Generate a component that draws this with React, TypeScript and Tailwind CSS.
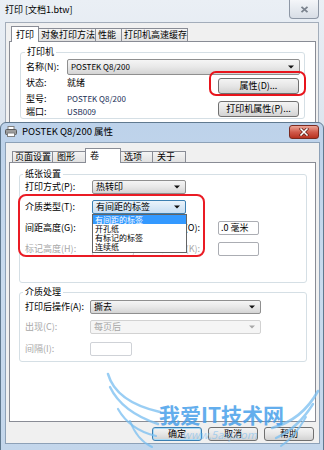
import React from "react";

const Arrow = ({ gray = false }: { gray?: boolean }) => (
  <svg width="6" height="4" viewBox="0 0 6 4" className="shrink-0">
    <path d="M0 0.5H6L3 3.5Z" fill={gray ? "#a8a8a8" : "#111"} />
  </svg>
);

const XIcon = ({ red = false }: { red?: boolean }) =>
  red ? (
    <svg width="10" height="8" viewBox="0 0 10 8">
      <path d="M2 1L8 7M8 1L2 7" stroke="#5a1810" strokeWidth="3" strokeLinecap="square" />
      <path d="M2 1L8 7M8 1L2 7" stroke="#ffffff" strokeWidth="1.6" strokeLinecap="square" />
    </svg>
  ) : (
    <svg width="9" height="7" viewBox="0 0 9 7">
      <path d="M1.5 0.8L7.5 6.2M7.5 0.8L1.5 6.2" stroke="#7b838e" strokeWidth="1.8" />
    </svg>
  );

const PrinterIcon = ({ className }: { className: string }) => (
  <svg width="12" height="11" viewBox="0 0 12 11" className={className}>
    <rect x="3" y="0.5" width="6" height="3.5" fill="#fff" stroke="#808080" />
    <rect x="0.5" y="3.5" width="11" height="5" rx="1" fill="#9c9c9c" stroke="#5a5a5a" />
    <rect x="2.5" y="7" width="7" height="3.5" fill="#fff" stroke="#808080" />
  </svg>
);

type ComboState = "normal" | "focused" | "disabled";

function Combo({
  value,
  className,
  state = "normal",
  valueClass = "",
}: {
  value: string;
  className: string;
  state?: ComboState;
  valueClass?: string;
}) {
  const look =
    state === "focused"
      ? "border-[#3c7fb1] bg-linear-to-b from-[#eaf3fb] to-[#c8def2] text-black"
      : state === "disabled"
      ? "border-[#d2d2d2] bg-[#f5f5f5] text-[#a6a6a6]"
      : "border-[#8f8f8f] bg-linear-to-b from-[#f5f5f5] via-[#e8e8e8] to-[#d4d4d4] text-black";
  return (
    <div
      className={`flex items-center justify-between rounded-[2px] border pl-[3px] pr-[5px] leading-[12px] ${look} ${className}`}
    >
      <span className={valueClass}>{value}</span>
      <Arrow gray={state === "disabled"} />
    </div>
  );
}

function TextBox({
  className,
  children,
  disabled = false,
}: {
  className: string;
  children?: React.ReactNode;
  disabled?: boolean;
}) {
  return (
    <div
      className={`h-[14px] rounded-[2px] border bg-white pl-[2px] leading-[12px] ${
        disabled ? "border-[#cfd2d7]" : "border-[#abadb3]"
      } ${className}`}
    >
      {children}
    </div>
  );
}

function Btn({
  className,
  children,
  def = false,
}: {
  className: string;
  children: React.ReactNode;
  def?: boolean;
}) {
  return (
    <div
      className={`flex items-center justify-center rounded-[3px] border bg-linear-to-b from-[#f4f4f4] via-[#e6e6e6] to-[#d2d2d2] leading-[12px] ${
        def ? "border-[#3c7fb1] shadow-[inset_0_0_0_1px_#a9dcf8]" : "border-[#707070]"
      } ${className}`}
    >
      {children}
    </div>
  );
}

function Tab({
  children,
  w,
  active = false,
  first = false,
  tall,
  short,
}: {
  children: React.ReactNode;
  w: string;
  active?: boolean;
  first?: boolean;
  tall: string;
  short: string;
}) {
  return (
    <div
      className={`flex items-center overflow-hidden whitespace-nowrap border border-[#898c95] pl-[2px] leading-[12px] ${w} ${
        first ? "" : "-ml-px"
      } ${active ? `${tall} border-b-0 bg-white` : `${short} bg-linear-to-b from-[#f4f4f4] to-[#e1e1e1]`}`}
    >
      {children}
    </div>
  );
}

function BackWindow() {
  return (
    <div className="absolute left-0 top-0 flex h-[140px] w-[324px] flex-col bg-linear-to-b from-[#eaeff5] to-[#dbe4ee]">
      <div className="flex h-[22px] shrink-0 items-start">
        <span className="ml-[5px] mt-[4px]">打印 [文档1.btw]</span>
        <div className="ml-auto mr-[5px] flex h-[19px] w-[30px] items-center justify-center rounded-b-[4px] border border-t-0 border-[#8d97a5] bg-linear-to-b from-[#f4f6f9] to-[#d8dee6]">
          <XIcon />
        </div>
      </div>
      <div className="ml-[5px] w-[314px] flex-1 border border-b-0 border-[#a3adba] bg-[#f0f0f0]">
        <div className="relative z-10 -mb-px flex h-[19px] items-end pl-[5px]">
          <Tab w="w-[28px]" active first tall="h-[16px]" short="h-[14px]">
            <span className="pl-[2px]">打印</span>
          </Tab>
          <Tab w="w-[58px]" tall="h-[16px]" short="h-[14px]">
            对象打印方法
          </Tab>
          <Tab w="w-[27px]" tall="h-[16px]" short="h-[14px]">
            性能
          </Tab>
          <Tab w="w-[67px]" tall="h-[16px]" short="h-[14px]">
            打印机高速缓存
          </Tab>
        </div>
        <div className="ml-[3px] h-[100px] w-[307px] border border-[#898c95] bg-white">
          <fieldset className="ml-[10px] mt-[4px] w-[285px] rounded-[3px] border border-[#d5dfe5]">
            <legend className="ml-[4px] px-[2px] leading-[12px]">打印机</legend>
            <div className="pl-[5px] pt-[1px]">
              <div className="flex items-center">
                <span className="w-[41px]">名称(N):</span>
                <Combo value="POSTEK Q8/200" className="h-[16px] w-[233px]" valueClass="text-[8px]" />
              </div>
              <div className="flex">
                <div className="flex-1">
                  <div className="mt-[1px] flex h-[13px] items-center">
                    <span className="w-[41px]">状态:</span>
                    <span>就绪</span>
                  </div>
                  <div className="mt-[3px] flex h-[13px] items-center">
                    <span className="w-[41px]">型号:</span>
                    <span className="text-[8px] text-[#1b2f57]">POSTEK Q8/200</span>
                  </div>
                  <div className="flex h-[13px] items-center">
                    <span className="w-[41px]">端口:</span>
                    <span className="text-[8px] text-[#1b2f57]">USB009</span>
                  </div>
                </div>
                <div className="mr-[5px] w-[81px]">
                  <Btn className="mt-[3px] h-[16px]">属性(D)...</Btn>
                  <Btn className="mt-[7px] h-[16px]">打印机属性(P)...</Btn>
                </div>
              </div>
            </div>
          </fieldset>
        </div>
      </div>
      <div className="absolute left-[209px] top-[71px] h-[25px] w-[97px] rounded-[7px] border-2 border-[#e8141c]" />
    </div>
  );
}

function FrontWindow() {
  const gray = "text-[#a8a8a8]";
  return (
    <div className="absolute left-0 top-[122px] flex h-[330px] w-[324px] flex-col rounded-t-[6px] border border-[#60798f] bg-linear-to-b from-[#bdd2ea] via-[#c9dbee] to-[#c3d6eb]">
      <div className="flex h-[19px] shrink-0 items-start">
        <PrinterIcon className="ml-[4px] mt-[3px]" />
        <span className="ml-[5px] mt-[2px] text-[9.5px]">POSTEK Q8/200 属性</span>
        <div className="ml-auto mr-[4px] mt-[2px] flex h-[14px] w-[30px] items-center justify-center rounded-[3px] border border-[#7a2a20] bg-linear-to-b from-[#eaa597] via-[#d15a4b] to-[#b7301f]">
          <XIcon red />
        </div>
      </div>
      <div className="ml-[4px] flex h-[302px] w-[315px] flex-col border border-[#8da1b7] bg-[#f0f0f0]">
        <div className="relative z-10 -mb-px flex h-[20px] items-end pl-[6px]">
          <Tab w="w-[41px]" first tall="h-[15px]" short="h-[12px]">
            页面设置
          </Tab>
          <Tab w="w-[34px]" tall="h-[15px]" short="h-[12px]">
            <span className="pl-[2px]">图形</span>
          </Tab>
          <Tab w="w-[36px]" active tall="h-[15px]" short="h-[12px]">
            <span className="pl-[2px]">卷</span>
          </Tab>
          <Tab w="w-[33px]" tall="h-[15px]" short="h-[12px]">
            <span className="pl-[1px]">选项</span>
          </Tab>
          <Tab w="w-[34px]" tall="h-[15px]" short="h-[12px]">
            <span className="pl-[2px]">关于</span>
          </Tab>
        </div>
        <div className="ml-[3px] h-[260px] w-[307px] shrink-0 border border-[#898c95] bg-white">
          <fieldset className="ml-[9px] mt-[5px] w-[288px] rounded-[3px] border border-[#d5dfe5]">
            <legend className="ml-[3px] px-[2px] leading-[12px]">纸张设置</legend>
            <div className="pb-[26px] pl-[5px]">
              <div className="flex h-[14px] items-center">
                <span className="w-[67px]">打印方式(P):</span>
                <Combo value="热转印" className="h-[14px] w-[94px]" />
              </div>
              <div className="mt-[6px] flex h-[14px] items-center">
                <span className="w-[67px]">介质类型(T):</span>
                <Combo value="有间距的标签" state="focused" className="h-[14px] w-[94px]" />
              </div>
              <div className="mt-[7px] flex h-[14px] items-center">
                <span className="w-[67px]">间距高度(G):</span>
                <TextBox className="w-[42px]" />
                <span className="w-[66px] text-right">偏移量(O):</span>
                <TextBox className="ml-[18px] w-[41px]">.0 毫米</TextBox>
              </div>
              <div className="mt-[7px] flex h-[14px] items-center">
                <span className={`w-[67px] ${gray}`}>标记高度(H):</span>
                <TextBox disabled className="w-[42px]" />
                <span className={`w-[66px] text-right ${gray}`}>偏移量(K):</span>
                <TextBox className="ml-[18px] w-[41px]" />
              </div>
            </div>
          </fieldset>
          <fieldset className="ml-[9px] mt-[3px] w-[288px] rounded-[3px] border border-[#d5dfe5]">
            <legend className="ml-[3px] px-[2px] leading-[12px]">介质处理</legend>
            <div className="pb-[5px] pl-[5px] pt-[2px]">
              <div className="flex h-[14px] items-center">
                <span className="w-[65px]">打印后操作(A):</span>
                <Combo value="撕去" className="h-[14px] w-[171px]" />
              </div>
              <div className="mt-[6px] flex h-[14px] items-center">
                <span className={`w-[65px] ${gray}`}>出现(C):</span>
                <Combo value="每页后" state="disabled" className="h-[14px] w-[171px]" />
              </div>
              <div className="mt-[8px] flex h-[14px] items-center">
                <span className={`w-[65px] ${gray}`}>间隔(I):</span>
                <TextBox disabled className="w-[42px]" />
              </div>
            </div>
          </fieldset>
        </div>
        <div className="mt-[5px] flex justify-end gap-[6px] pr-[5px]">
          <Btn def className="h-[14px] w-[50px]">
            确定
          </Btn>
          <Btn className="h-[14px] w-[50px]">取消</Btn>
          <Btn className="h-[14px] w-[50px]">帮助</Btn>
        </div>
      </div>
    </div>
  );
}

function DropList() {
  const items = ["有间距的标签", "开孔纸", "有标记的标签", "连续纸"];
  return (
    <div className="absolute left-[92px] top-[214px] z-20 flex h-[39px] w-[95px] flex-col border border-[#646464] bg-white">
      {items.map((t, i) => (
        <div
          key={t}
          className={`flex h-[9.25px] items-center pl-[2px] text-[8px] leading-[8px] ${
            i === 0 ? "bg-[#3399ff] text-white" : "text-black"
          }`}
        >
          {t}
        </div>
      ))}
    </div>
  );
}

function Watermark() {
  return (
    <div className="pointer-events-none absolute left-0 top-0 z-40 h-[450px] w-[324px]">
      <svg width="324" height="450" viewBox="0 0 324 450" className="absolute left-0 top-0">
        <g fill="none" stroke="#78bdf0" strokeOpacity="0.75" strokeLinecap="round">
          <path d="M108 374 Q116 402 160 412" strokeWidth="2.6" />
          <path d="M110 387 Q122 412 158 424" strokeWidth="2.4" />
          <path d="M118 409 Q130 430 156 436" strokeWidth="2.2" />
          <path d="M130 421 Q137 440 152 447" strokeWidth="2" />
          <path d="M318 391 Q302 420 272 428" strokeWidth="2.6" />
          <path d="M313 404 Q298 428 276 438" strokeWidth="2.4" />
          <path d="M306 417 Q294 438 281 446" strokeWidth="2" />
        </g>
      </svg>
      <div className="absolute left-[159px] top-[402px] text-[21px] font-bold leading-[24px] text-[#3d9be9] opacity-80">
        我爱IT技术网
      </div>
      <div className="absolute left-[182px] top-[428px] text-[11px] italic leading-[13px] text-[#7fc0f0] opacity-60">
        www.5axj.com
      </div>
    </div>
  );
}

export default function App() {
  return (
    <div className="relative h-[450px] w-[324px] overflow-hidden bg-[#dfe6ee] font-['Noto_Sans_CJK_SC',sans-serif] text-[9px] leading-[12px] text-black">
      <BackWindow />
      <FrontWindow />
      <DropList />
      <div className="absolute left-[18px] top-[194px] z-30 h-[63px] w-[187px] rounded-[8px] border-2 border-[#ea1b24]" />
      <Watermark />
    </div>
  );
}
